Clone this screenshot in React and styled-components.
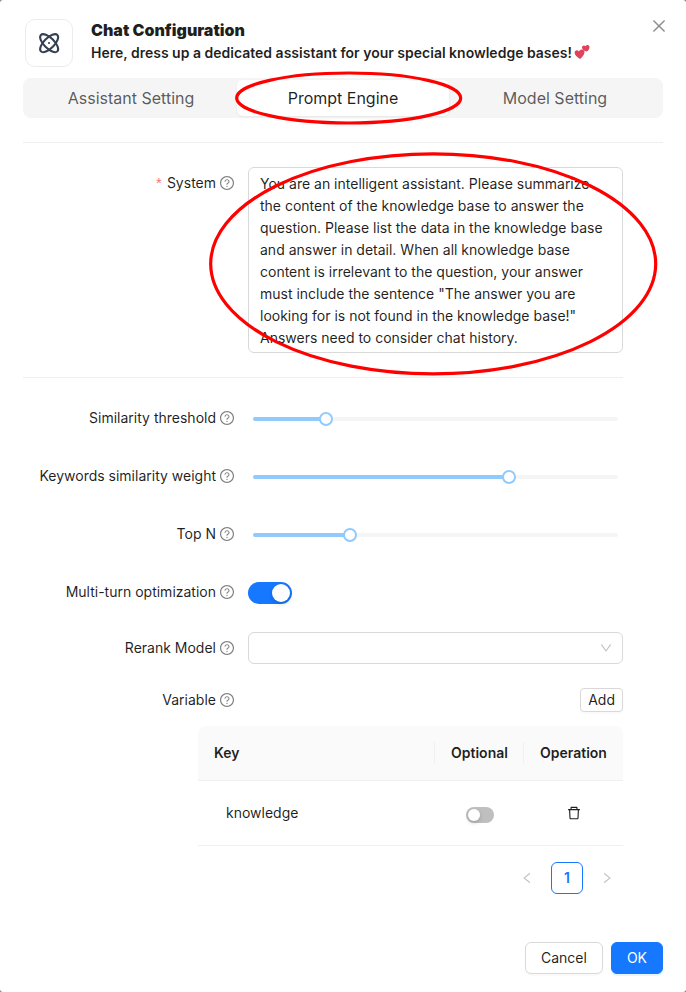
import React from "react";
import styled, { createGlobalStyle } from "styled-components";
import {
  AiOutlineClose,
  AiOutlineDelete,
  AiOutlineDown,
  AiOutlineLeft,
  AiOutlineQuestionCircle,
  AiOutlineRight,
} from "react-icons/ai";

const GlobalStyle = createGlobalStyle`
  * { box-sizing: border-box; }
  body {
    margin: 0;
    background: #7d7d7d;
    font-family: Inter, "Noto Sans", sans-serif;
    font-size: 14px;
    line-height: 22px;
    color: rgba(0, 0, 0, 0.88);
  }
  button { font: inherit; color: inherit; }
`;

const Modal = styled.main`
  position: relative;
  width: 686px;
  height: 992px;
  padding: 19px 23px 18px;
  display: flex;
  flex-direction: column;
  background: #fff;
  border-radius: 3px;
  overflow: hidden;
`;

const Header = styled.header`
  display: flex;
  height: 59px;
  padding-left: 2px;
`;

const LogoBox = styled.div`
  display: grid;
  place-items: center;
  width: 48px;
  height: 48px;
  border: 1px solid #eaecf0;
  border-radius: 10px;
`;

const Heading = styled.div`
  flex: 1;
  margin-left: 18px;
`;

const Title = styled.h1`
  margin: 0;
  font-size: 16px;
  font-weight: 900;
  line-height: 22px;
`;

const Subtitle = styled.p`
  display: flex;
  align-items: center;
  gap: 3px;
  margin: 0;
  font-weight: 600;
  line-height: 23px;
  svg { margin: 0 0 2px -1px; }
`;

const CloseButton = styled.button`
  display: grid;
  place-items: center;
  width: 22px;
  height: 22px;
  margin: -4px -7px 0 0;
  padding: 0;
  border: 0;
  background: none;
  color: rgba(0, 0, 0, 0.45);
  font-size: 18px;
`;

const Segmented = styled.nav`
  display: grid;
  grid-template-columns: repeat(3, 1fr);
  height: 40px;
  padding: 2px;
  border-radius: 8px;
  background: #f5f5f5;
`;

const Segment = styled.button`
  padding: 0;
  border: 0;
  border-radius: 6px;
  font-size: 16px;
  line-height: 36px;
  color: ${(p) => (p.$active ? "rgba(0,0,0,0.88)" : "rgba(0,0,0,0.65)")};
  background: ${(p) => (p.$active ? "#fff" : "transparent")};
  box-shadow: ${(p) =>
    p.$active ? "0 1px 2px rgba(0,0,0,0.03), 0 1px 6px -1px rgba(0,0,0,0.02), 0 2px 4px rgba(0,0,0,0.02)" : "none"};
`;

const Divider = styled.hr`
  width: 100%;
  height: 1px;
  margin: ${(p) => p.$margin};
  border: 0;
  background: #eeeeee;
`;

const Form = styled.form`
  display: flex;
  flex-direction: column;
  width: 600px;
`;

const FormRow = styled.div`
  display: grid;
  grid-template-columns: 225px 375px;
  height: ${(p) => p.$height}px;
`;

const Label = styled.label`
  display: flex;
  align-items: center;
  justify-content: flex-end;
  gap: 3px;
  height: 32px;
  padding-right: 13px;
  svg { font-size: 16px; color: rgba(0, 0, 0, 0.5); }
`;

const Required = styled.span`
  margin-right: 1px;
  color: #ff4d4f;
  opacity: 0.8;
  font-family: "Liberation Sans", sans-serif;
  font-size: 15px;
  line-height: 1;
`;

const Prompt = styled.textarea`
  height: 186px;
  padding: 5px 11px;
  border: 1px solid #d9d9d9;
  border-radius: 6px;
  outline: none;
  resize: none;
  overflow: hidden;
  font: inherit;
  color: inherit;
`;

const SliderBox = styled.div`
  display: flex;
  align-items: center;
  height: 34px;
  padding: 0 5px;
`;

const Rail = styled.div`
  display: flex;
  align-items: center;
  width: 100%;
  height: 4px;
  border-radius: 2px;
  background: #f5f5f5;
`;

const Track = styled.div`
  height: 4px;
  border-radius: 2px;
  background: #91caff;
`;

const Handle = styled.div`
  flex: none;
  width: 14px;
  height: 14px;
  margin-left: -7px;
  border: 2px solid #91caff;
  border-radius: 50%;
  background: #fff;
`;

const Switch = styled.button`
  display: flex;
  align-items: center;
  justify-content: ${(p) => (p.$on ? "flex-end" : "flex-start")};
  width: ${(p) => (p.$small ? 28 : 44)}px;
  height: ${(p) => (p.$small ? 16 : 22)}px;
  margin: ${(p) => (p.$small ? "4px 0 0" : "6px 0 0")};
  padding: 2px;
  border: 0;
  border-radius: 11px;
  background: ${(p) => (p.$on ? "#1677ff" : "#bfbfbf")};
`;

const Knob = styled.span`
  width: ${(p) => (p.$small ? 12 : 18)}px;
  height: ${(p) => (p.$small ? 12 : 18)}px;
  border-radius: 50%;
  background: #fff;
  box-shadow: 0 2px 4px rgba(0, 35, 11, 0.2);
`;

const Select = styled.div`
  display: flex;
  align-items: center;
  justify-content: flex-end;
  height: 32px;
  padding: 0 9px;
  border: 1px solid #d9d9d9;
  border-radius: 6px;
  font-size: 14px;
  color: rgba(0, 0, 0, 0.25);
`;

const Button = styled.button`
  height: ${(p) => (p.$small ? 24 : 32)}px;
  padding: 0 ${(p) => (p.$small ? 7 : 15)}px;
  border: 1px solid ${(p) => (p.$primary ? "#1677ff" : "#d9d9d9")};
  border-radius: ${(p) => (p.$small ? 4 : 6)}px;
  color: ${(p) => (p.$primary ? "#fff" : "inherit")};
  background: ${(p) => (p.$primary ? "#1677ff" : "#fff")};
  box-shadow: 0 2px 0 ${(p) => (p.$primary ? "rgba(5,145,255,0.1)" : "rgba(0,0,0,0.02)")};
  line-height: 22px;
`;

const AddCell = styled.div`
  display: flex;
  align-items: center;
  justify-content: flex-end;
  height: 32px;
`;

const Table = styled.section`
  align-self: flex-end;
  width: 425px;
`;

const TableHead = styled.div`
  display: grid;
  grid-template-columns: 237px 89px 99px;
  align-items: center;
  height: 55px;
  border-bottom: 1px solid #f0f0f0;
  border-radius: 8px 8px 0 0;
  background: #fafafa;
  font-weight: 600;
`;

const HeadCell = styled.div`
  padding-left: 16px;
  border-right: ${(p) => (p.$last ? "0" : "1px solid #f0f0f0")};
`;

const TableRow = styled(TableHead)`
  height: 65px;
  border-radius: 0;
  background: #fff;
  font-weight: 400;
`;

const KeyCell = styled.div`
  padding-left: 28px;
`;

const IconCell = styled.div`
  display: flex;
  align-items: center;
  justify-content: center;
  font-size: 16px;
`;

const Pagination = styled.div`
  display: flex;
  justify-content: flex-end;
  gap: 8px;
  margin-top: 16px;
`;

const PageItem = styled.button`
  display: grid;
  place-items: center;
  width: 32px;
  height: 32px;
  padding: 0;
  border: 1px solid ${(p) => (p.$active ? "#1677ff" : "transparent")};
  border-radius: 6px;
  background: #fff;
  font-weight: ${(p) => (p.$active ? 600 : 400)};
  font-size: 14px;
  color: ${(p) => (p.$active ? "#1677ff" : "rgba(0,0,0,0.25)")};
`;

const Footer = styled.footer`
  display: flex;
  justify-content: flex-end;
  gap: 8px;
  margin-top: auto;
`;

/* Hand-drawn emphasis rings laid over the dialog */
const Annotations = styled.svg`
  position: absolute;
  inset: 0;
  pointer-events: none;
`;

const LogoIcon = () => (
  <svg width="26" height="26" viewBox="0 0 24 24" fill="none" stroke="#344054" strokeWidth="1.9" strokeLinecap="round" strokeLinejoin="round">
    <path d="M12 12h.01M15.54 15.54c-4.2 4.19-9.12 6.08-11 4.2-1.88-1.88 0-6.8 4.2-11C12.92 4.55 17.84 2.66 19.72 4.54c1.88 1.88 0 6.8-4.18 11Z" />
    <path d="M15.54 8.74c4.19 4.2 6.07 9.12 4.19 11-1.88 1.88-6.8 0-11-4.2-4.19-4.2-6.07-9.12-4.19-11 1.88-1.88 6.8 0 11 4.2Z" />
  </svg>
);

const Hearts = () => (
  <svg width="16" height="16" viewBox="0 0 16 16" fill="#e0415c">
    <path d="M6 15C3 13 .7 11.2.6 8.8.5 6.2 3.500 5.200 5 7.400 6.600 4.400 10.700 5 10.500 8.200 10.300 11 8 13.300 6 15Z" />
    <path d="M12.800 7.600C10 6.800 8 5.500 8 3.500 8 1.300 10.500.8 11.600 2.300 12.500.3 15.500.6 15.500 3 15.500 5 14.200 6.500 12.800 7.600Z" />
  </svg>
);

const FieldLabel = ({ children, required }) => (
  <Label>
    <span>
      {required && <Required>* </Required>}
      {children}
    </span>
    <AiOutlineQuestionCircle />
  </Label>
);

const sliders = [
  { label: "Similarity threshold", value: 20 },
  { label: "Keywords similarity weight", value: 70 },
  { label: "Top N", value: 26.6 },
];

const promptText = `You are an intelligent assistant. Please summarize the content of the knowledge base to answer the question. Please list the data in the knowledge base and answer in detail. When all knowledge base content is irrelevant to the question, your answer must include the sentence "The answer you are looking for is not found in the knowledge base!" Answers need to consider chat history.`;

export default function App() {
  return (
    <>
      <GlobalStyle />
      <Modal>
        <Header>
          <LogoBox><LogoIcon /></LogoBox>
          <Heading>
            <Title>Chat Configuration</Title>
            <Subtitle>
              Here, dress up a dedicated assistant for your special knowledge bases!
              <Hearts />
            </Subtitle>
          </Heading>
          <CloseButton aria-label="Close"><AiOutlineClose /></CloseButton>
        </Header>
        <Segmented>
          <Segment>Assistant Setting</Segment>
          <Segment $active>Prompt Engine</Segment>
          <Segment>Model Setting</Segment>
        </Segmented>
        <Divider $margin="24px 0" />
        <Form>
          <FormRow $height={186}>
            <FieldLabel required>System</FieldLabel>
            <Prompt readOnly value={promptText} />
          </FormRow>
          <Divider $margin="24px 0" />
          {sliders.map((s) => (
            <FormRow key={s.label} $height={58}>
              <FieldLabel>{s.label}</FieldLabel>
              <SliderBox>
                <Rail>
                  <Track style={{ width: `${s.value}%` }} />
                  <Handle />
                </Rail>
              </SliderBox>
            </FormRow>
          ))}
          <FormRow $height={56}>
            <FieldLabel>Multi-turn optimization</FieldLabel>
            <Switch type="button" $on><Knob /></Switch>
          </FormRow>
          <FormRow $height={52}>
            <FieldLabel>Rerank Model</FieldLabel>
            <Select><AiOutlineDown /></Select>
          </FormRow>
          <FormRow $height={42}>
            <FieldLabel>Variable</FieldLabel>
            <AddCell><Button type="button" $small>Add</Button></AddCell>
          </FormRow>
          <Table>
            <TableHead>
              <HeadCell>Key</HeadCell>
              <HeadCell>Optional</HeadCell>
              <HeadCell $last>Operation</HeadCell>
            </TableHead>
            <TableRow>
              <KeyCell>knowledge</KeyCell>
              <IconCell><Switch type="button" $small><Knob $small /></Switch></IconCell>
              <IconCell><AiOutlineDelete /></IconCell>
            </TableRow>
            <Pagination>
              <PageItem type="button"><AiOutlineLeft /></PageItem>
              <PageItem type="button" $active>1</PageItem>
              <PageItem type="button"><AiOutlineRight /></PageItem>
            </Pagination>
          </Table>
        </Form>
        <Footer>
          <Button>Cancel</Button>
          <Button $primary>OK</Button>
        </Footer>
        <Annotations width="686" height="992" fill="none" stroke="#f00" strokeWidth="3.2">
          <ellipse cx="348.700" cy="98" rx="112" ry="25" />
          <ellipse cx="433.200" cy="263.800" rx="222.500" ry="110" />
        </Annotations>
      </Modal>
    </>
  );
}
